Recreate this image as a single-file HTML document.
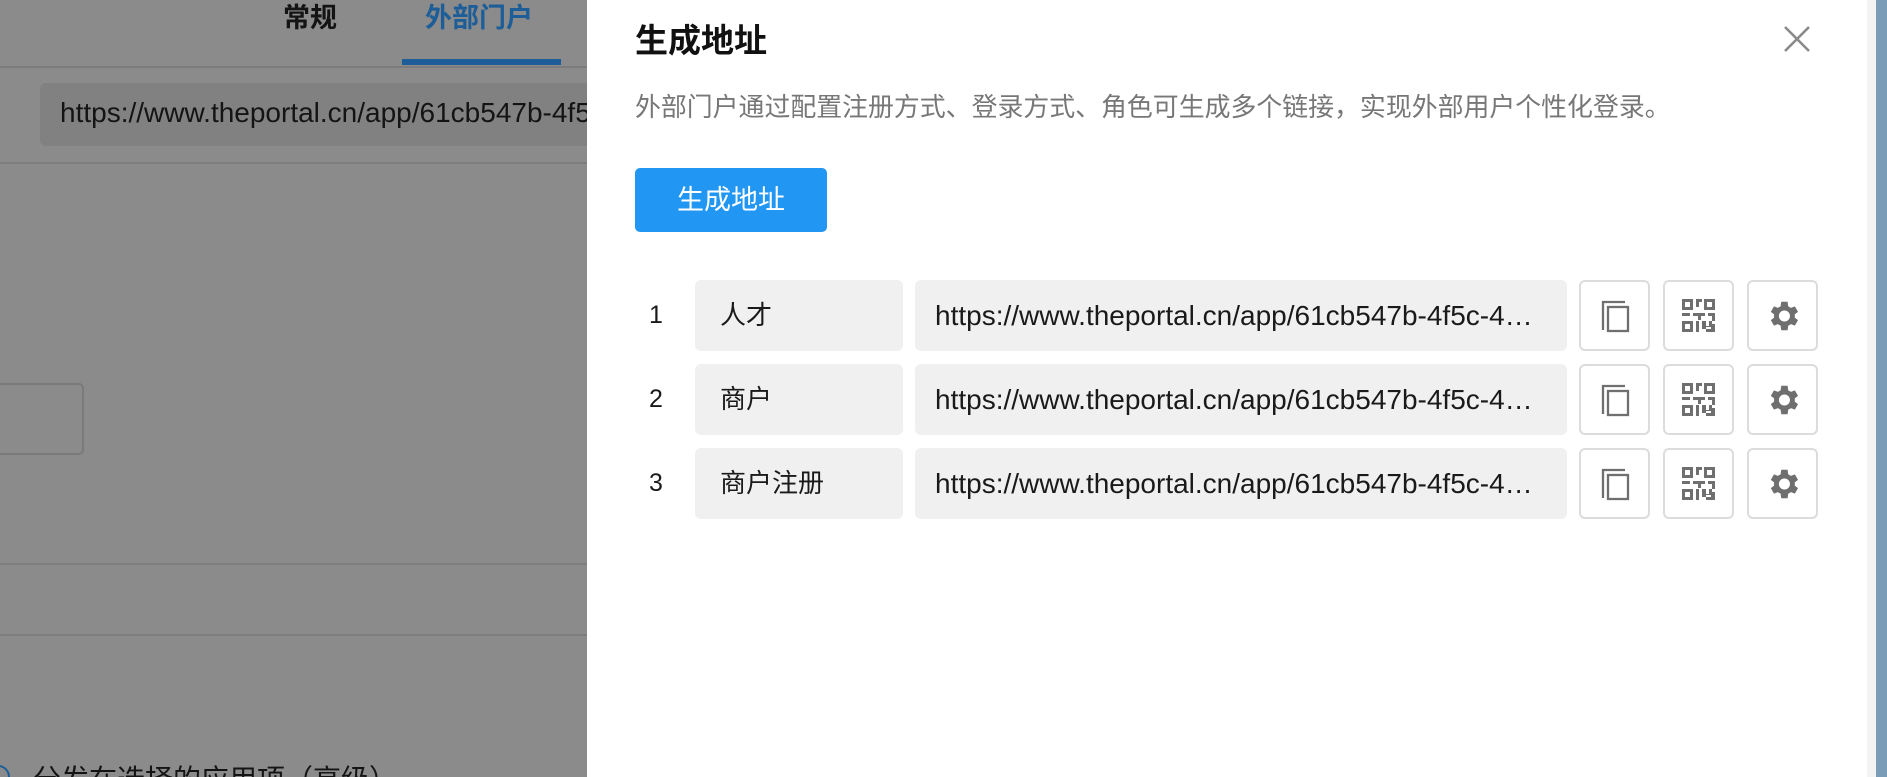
<!DOCTYPE html>
<html style="width:1887px;height:777px;overflow:hidden"><head><meta charset="utf-8"><style>
*{margin:0;padding:0;box-sizing:border-box}
body{width:1887px;height:777px;overflow:hidden;position:relative;background:#8b8b8b;font-family:"Liberation Sans","Noto Sans CJK SC",sans-serif}
.a{position:absolute}
.tab{font-size:27px;font-weight:bold;top:1px;line-height:34px}
.row{position:absolute;left:0;width:100%;height:71px}
.num{left:644px;width:24px;text-align:center;font-size:25px;line-height:71px;color:#1a1a1a}
.name{left:695px;width:208px;height:71px;background:#f0f0f0;border-radius:6px;font-size:26px;line-height:71px;padding-left:25px;color:#1a1a1a}
.url{left:915px;width:652px;height:71px;background:#f0f0f0;border-radius:6px;font-size:28px;line-height:71px;padding-left:20px;color:#1a1a1a;white-space:nowrap}
.btn{width:71px;height:71px;border:2px solid #dcdcdc;border-radius:6px;background:#fff;display:flex;align-items:center;justify-content:center}
</style></head><body>
<div class="a tab" style="left:283px;color:#141414">常规</div>
<div class="a tab" style="left:425px;color:#1d5e98">外部门户</div>
<div class="a" style="left:402px;top:59px;width:159px;height:6px;background:#1d5e98"></div>
<div class="a" style="left:0;top:66px;width:600px;height:2px;background:#7c7c7c"></div>
<div class="a" style="left:40px;top:83px;width:560px;height:63px;background:#818181;border-radius:6px"></div>
<div class="a" style="left:60px;top:97px;font-size:28px;color:#141414;white-space:nowrap">https://www.theportal.cn/app/61cb547b-4f5c-4</div>
<div class="a" style="left:0;top:162px;width:600px;height:2px;background:#7e7e7e"></div>
<div class="a" style="left:-10px;top:383px;width:94px;height:72px;border:2px solid #7a7a7a;border-radius:5px"></div>
<div class="a" style="left:0;top:563px;width:600px;height:2px;background:#7e7e7e"></div>
<div class="a" style="left:0;top:634px;width:600px;height:2px;background:#7e7e7e"></div>
<div class="a" style="left:-14px;top:765px;width:24px;height:24px;border:2px solid #1d5e98;border-radius:50%"></div>
<div class="a" style="left:33px;top:760px;height:17px;overflow:hidden;font-size:28px;line-height:40px;color:#141414;white-space:nowrap">分发在选择的应用项（高级）</div>

<div class="a" style="left:587px;top:0;width:1280px;height:777px;background:#fff"></div>
<div class="a" style="left:1867px;top:0;width:9px;height:777px;background:#f3f3f3"></div>
<div class="a" style="left:1876px;top:0;width:11px;height:777px;background:#7a9cb6"></div>

<div class="a" style="left:635px;top:20px;font-size:33px;font-weight:bold;color:#111;line-height:42px">生成地址</div>
<svg class="a" style="left:1783px;top:25px" width="28" height="28" viewBox="0 0 28 28"><path d="M2 2L26 26M26 2L2 26" stroke="#8a8a8a" stroke-width="2.6"/></svg>
<div class="a" style="left:635px;top:91px;font-size:25.9px;color:#777;line-height:34px;white-space:nowrap">外部门户通过配置注册方式、登录方式、角色可生成多个链接，实现外部用户个性化登录。</div>
<div class="a" style="left:635px;top:168px;width:192px;height:64px;background:#2196f3;border-radius:5px;color:#fff;font-size:27px;line-height:64px;text-align:center">生成地址</div>

<div class="row" style="top:280px">
<div class="a num">1</div><div class="a name">人才</div><div class="a url">https://www.theportal.cn/app/61cb547b-4f5c-4…</div>
</div>
<div class="row" style="top:364px">
<div class="a num">2</div><div class="a name">商户</div><div class="a url">https://www.theportal.cn/app/61cb547b-4f5c-4…</div>
</div>
<div class="row" style="top:448px">
<div class="a num">3</div><div class="a name">商户注册</div><div class="a url">https://www.theportal.cn/app/61cb547b-4f5c-4…</div>
</div>

<div id="btns"></div>
<script>
var copy='<svg width="30" height="34" viewBox="0 0 30 34"><path d="M3 31V3H25" fill="none" stroke="#6f6f6f" stroke-width="2.3"/><rect x="8" y="8" width="20" height="24" fill="none" stroke="#6f6f6f" stroke-width="2.3"/></svg>';
var qr='<svg width="33" height="33" viewBox="0 0 33 33" fill="#6f6f6f"><path d="M0 0h11v11H0zM3 3v5h5V3zM22 0h11v11H22zM25 3v5h5V3zM0 22h11v11H0zM3 25v5h5v-5zM14 0h6v3h-3v5h-3zM0 14h8v3H0zM11 14h12v3h-4v4h-3v-4h-5zM26 14h7v8h-3v-5h-4zM14 22h3v11h-3zM20 22h4v5h3v-5h3v3h3v8h-9v-3h-4zM24 30h5v-2h-5z"/></svg>';
var gear='<svg width="38" height="38" viewBox="0 0 24 24"><path fill="#6f6f6f" d="M19.4 13a7.5 7.5 0 000-2l2.1-1.6-2-3.5-2.5 1a7.3 7.3 0 00-1.7-1L14.9 3h-4l-.4 2.9a7.3 7.3 0 00-1.7 1l-2.5-1-2 3.5L6.4 11a7.5 7.5 0 000 2l-2.1 1.6 2 3.5 2.5-1a7.3 7.3 0 001.7 1l.4 2.9h4l.4-2.9a7.3 7.3 0 001.7-1l2.5 1 2-3.5zM12.9 15.5a3.5 3.5 0 110-7 3.5 3.5 0 010 7z"/></svg>';
var h='';[280,364,448].forEach(function(y){[[1579,copy],[1663,qr],[1747,gear]].forEach(function(b){h+='<div class="a btn" style="left:'+b[0]+'px;top:'+y+'px">'+b[1]+'</div>';});});
document.getElementById('btns').innerHTML=h;
</script>
</body></html>
